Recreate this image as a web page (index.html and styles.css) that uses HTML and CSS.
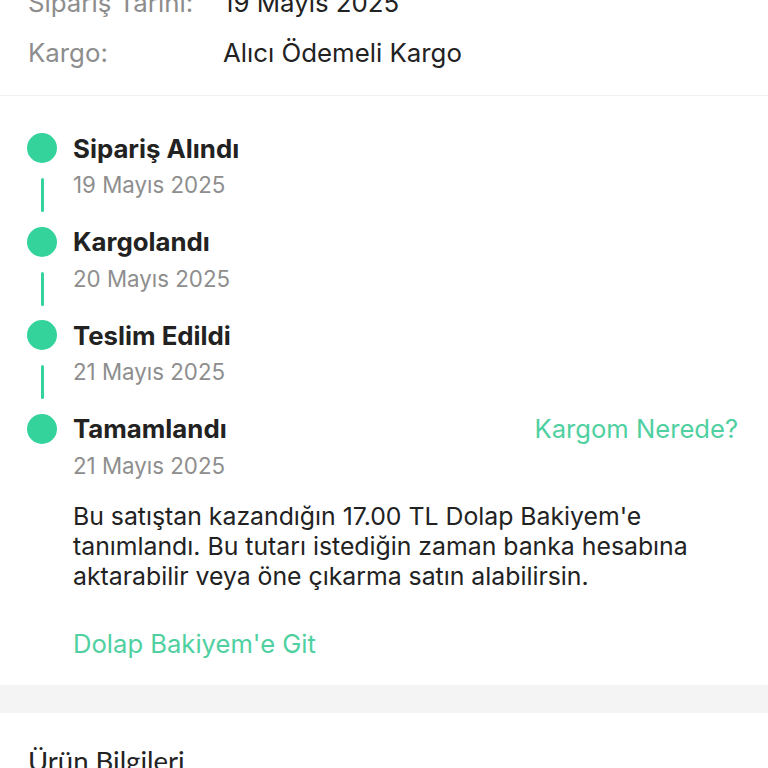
FILE: index.html
```html
<!DOCTYPE html>
<html lang="tr">
<head>
<meta charset="utf-8">
<title>Sipariş Detayı</title>
<link rel="stylesheet" href="styles.css">
</head>
<body>
<div class="page">
  <section class="info">
    <div class="info-row"><span class="info-label">Sipariş Tarihi:</span><span class="info-value">19 Mayıs 2025</span></div>
    <div class="info-row"><span class="info-label">Kargo:</span><span class="info-value">Alıcı Ödemeli Kargo</span></div>
  </section>

  <section class="timeline">
    <div class="step">
      <div class="marker"><span class="dot"></span><span class="line"></span></div>
      <div class="step-body">
        <div class="step-head"><span class="step-title">Sipariş Alındı</span></div>
        <div class="step-date">19 Mayıs 2025</div>
      </div>
    </div>
    <div class="step">
      <div class="marker"><span class="dot"></span><span class="line"></span></div>
      <div class="step-body">
        <div class="step-head"><span class="step-title">Kargolandı</span></div>
        <div class="step-date">20 Mayıs 2025</div>
      </div>
    </div>
    <div class="step">
      <div class="marker"><span class="dot"></span><span class="line"></span></div>
      <div class="step-body">
        <div class="step-head"><span class="step-title">Teslim Edildi</span></div>
        <div class="step-date">21 Mayıs 2025</div>
      </div>
    </div>
    <div class="step last">
      <div class="marker"><span class="dot"></span></div>
      <div class="step-body">
        <div class="step-head"><span class="step-title">Tamamlandı</span><a class="link" href="#">Kargom Nerede?</a></div>
        <div class="step-date">21 Mayıs 2025</div>
        <p class="note">Bu satıştan kazandığın 17.00 TL Dolap Bakiyem'e tanımlandı. Bu tutarı istediğin zaman banka hesabına aktarabilir veya öne çıkarma satın alabilirsin.</p>
        <a class="link balance" href="#">Dolap Bakiyem'e Git</a>
      </div>
    </div>
  </section>

  <div class="band"></div>

  <section class="product">
    <h2 class="product-title">Ürün Bilgileri</h2>
  </section>
</div>
</body>
</html>
```

FILE: styles.css
```css
html, body {
  margin: 0;
  padding: 0;
  background: #ffffff;
}
body {
  font-family: Inter, "Noto Sans", sans-serif;
  color: #222222;
  overflow: hidden;
}
.page {
  width: 768px;
}
.info {
  margin-top: -23px;
  padding: 0 28px 18px;
  border-bottom: 1px solid #f1f1f1;
}
.info-row {
  display: flex;
  height: 50px;
  align-items: center;
  font-size: 25.8px;
}
.info-label {
  width: 195px;
  color: #8d8d8d;
}
.info-value {
  color: #222222;
}
.timeline {
  padding: 37px 30px 0 27px;
}
.step {
  display: flex;
  gap: 16px;
  height: 93.67px;
}
.step.last {
  height: auto;
}
.marker {
  width: 30px;
  flex: none;
  display: flex;
  flex-direction: column;
  align-items: center;
}
.dot {
  width: 30px;
  height: 30px;
  border-radius: 50%;
  background: #34d39c;
}
.line {
  margin-top: 15px;
  width: 3px;
  height: 34px;
  border-radius: 2px;
  background: #34d39c;
}
.step-body {
  flex: 1;
}
.step-head {
  display: flex;
  justify-content: space-between;
  align-items: center;
  height: 30px;
}
.step-title {
  font-size: 25.8px;
  font-weight: 700;
  color: #222222;
}
.link {
  color: #4fd0a0;
  text-decoration: none;
  font-size: 25.6px;
}
.step-date {
  margin-top: 7px;
  line-height: 30px;
  font-size: 22.3px;
  color: #8e8e8e;
}
.note {
  margin: 20px 0 0;
  font-size: 24.8px;
  line-height: 30px;
  color: #222222;
}
.balance {
  display: block;
  margin-top: 38px;
  line-height: 30px;
  padding-bottom: 26px;
}
.band {
  height: 28px;
  background: #f4f4f4;
}
.product {
  padding: 33px 28px 0;
}
.product-title {
  margin: 0;
  font-size: 27.5px;
  font-weight: 400;
  font-family: Lato, Inter, sans-serif;
  color: #222222;
  line-height: 30px;
}
```
